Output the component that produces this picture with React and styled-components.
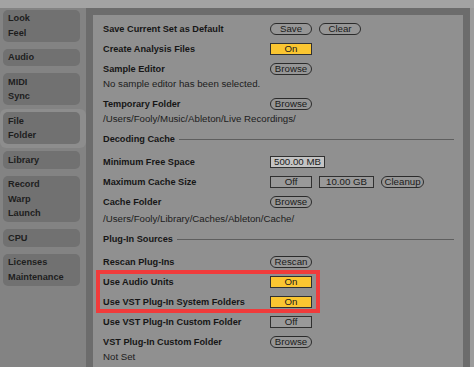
import styled, { createGlobalStyle } from "styled-components";

const GlobalStyle = createGlobalStyle`
  html, body {
    margin: 0;
    padding: 0;
  }
  body {
    background: #858585;
    font-family: "Liberation Sans", Arial, sans-serif;
  }
`;

const Window = styled.div`
  display: flex;
  flex-direction: column;
  width: 474px;
  height: 367px;
  overflow: hidden;
  background: #838383;
`;

const TopStrip = styled.div`
  height: 8px;
  flex: none;
  background: #a3a3a3;
`;

const Body = styled.div`
  display: flex;
  flex: 1;
  min-height: 0;
`;

const Sidebar = styled.nav`
  width: 86px;
  flex: none;
  display: flex;
  flex-direction: column;
  margin-top: -2px;
`;

const TabItem = styled.div`
  padding: 3.5px 6px 3.5px 3px;
  border-radius: 6px;
  background: ${(p) => (p.$selected ? "#8d8d8d" : "transparent")};
`;

const TabButton = styled.div`
  background: #717171;
  border-radius: 5px;
  padding: 1.5px 0 1.5px 5px;
  font-size: 9.2px;
  font-weight: 700;
  line-height: 14.5px;
  color: #1e1e1e;

  span {
    display: block;
  }
`;

const Frame = styled.main`
  flex: 1;
  border: 7px solid #6c6c6c;
  border-bottom: none;
  background: #909090;
  padding: 4px 9px 0 10px;
  overflow: hidden;
`;

const RightEdge = styled.div`
  width: 4px;
  flex: none;
  background: #9c9c9c;
`;

const Row = styled.div`
  display: grid;
  grid-template-columns: 167px 1fr;
  align-items: center;
  height: 20px;
`;

const Label = styled.div`
  font-size: 9.2px;
  font-weight: 700;
  color: #161616;
  white-space: nowrap;
`;

const Controls = styled.div`
  display: flex;
  align-items: center;
  gap: 7px;
`;

const Pill = styled.div`
  box-sizing: border-box;
  width: ${(p) => p.$w || 42}px;
  height: 12px;
  border: 1px solid #2b2b2b;
  border-radius: 6px;
  background: #969696;
  font-size: 9.7px;
  line-height: 10px;
  text-align: center;
  color: #1a1a1a;
`;

const tones = {
  on: "#fbc631",
  light: "#c4c4c4",
  plain: "#999999",
};

const Box = styled.div`
  box-sizing: border-box;
  width: ${(p) => p.$w || 42}px;
  height: 12px;
  border: 1px solid #303030;
  background: ${(p) => tones[p.$tone || "plain"]};
  font-size: 9.7px;
  line-height: 10px;
  text-align: center;
  color: #1a1a1a;
`;

const Info = styled.div`
  height: 20px;
  line-height: 20px;
  margin-top: ${(p) => p.$pull ?? -5}px;
  font-size: 9.7px;
  color: #1c1c1c;
  white-space: nowrap;
`;

const Section = styled.div`
  display: flex;
  align-items: center;
  gap: 4px;
  height: 20px;
  margin-bottom: 3px;
`;

const Rule = styled.div`
  flex: 1;
  height: 1px;
  background: #5e5e5e;
`;

const Highlight = styled.div`
  position: relative;

  &::after {
    content: "";
    position: absolute;
    left: -7px;
    top: -2px;
    width: 224px;
    height: 43px;
    box-sizing: border-box;
    border: 4px solid #f03b3b;
    pointer-events: none;
  }
`;

const tabs = [
  ["Look", "Feel"],
  ["Audio"],
  ["MIDI", "Sync"],
  ["File", "Folder"],
  ["Library"],
  ["Record", "Warp", "Launch"],
  ["CPU"],
  ["Licenses", "Maintenance"],
];

export default function App() {
  return (
    <>
      <GlobalStyle />
      <Window>
        <TopStrip />
        <Body>
          <Sidebar>
            {tabs.map((lines) => (
              <TabItem key={lines[0]} $selected={lines[0] === "File"}>
                <TabButton>
                  {lines.map((l) => (
                    <span key={l}>{l}</span>
                  ))}
                </TabButton>
              </TabItem>
            ))}
          </Sidebar>

          <Frame>
            <Row>
              <Label>Save Current Set as Default</Label>
              <Controls>
                <Pill>Save</Pill>
                <Pill>Clear</Pill>
              </Controls>
            </Row>
            <Row>
              <Label>Create Analysis Files</Label>
              <Controls>
                <Box $tone="on">On</Box>
              </Controls>
            </Row>
            <Row>
              <Label>Sample Editor</Label>
              <Controls>
                <Pill>Browse</Pill>
              </Controls>
            </Row>
            <Info>No sample editor has been selected.</Info>
            <Row>
              <Label>Temporary Folder</Label>
              <Controls>
                <Pill>Browse</Pill>
              </Controls>
            </Row>
            <Info>/Users/Fooly/Music/Ableton/Live Recordings/</Info>

            <Section>
              <Label>Decoding Cache</Label>
              <Rule />
            </Section>
            <Row>
              <Label>Minimum Free Space</Label>
              <Controls>
                <Box $tone="light" $w={55}>
                  500.00 MB
                </Box>
              </Controls>
            </Row>
            <Row>
              <Label>Maximum Cache Size</Label>
              <Controls>
                <Box>Off</Box>
                <Box $w={55}>10.00 GB</Box>
                <Pill $w={43}>Cleanup</Pill>
              </Controls>
            </Row>
            <Row>
              <Label>Cache Folder</Label>
              <Controls>
                <Pill>Browse</Pill>
              </Controls>
            </Row>
            <Info $pull={-3}>/Users/Fooly/Library/Caches/Ableton/Cache/</Info>

            <Section>
              <Label>Plug-In Sources</Label>
              <Rule />
            </Section>
            <Row>
              <Label>Rescan Plug-Ins</Label>
              <Controls>
                <Pill>Rescan</Pill>
              </Controls>
            </Row>
            <Highlight>
              <Row>
                <Label>Use Audio Units</Label>
                <Controls>
                  <Box $tone="on">On</Box>
                </Controls>
              </Row>
              <Row>
                <Label>Use VST Plug-In System Folders</Label>
                <Controls>
                  <Box $tone="on">On</Box>
                </Controls>
              </Row>
            </Highlight>
            <Row>
              <Label>Use VST Plug-In Custom Folder</Label>
              <Controls>
                <Box>Off</Box>
              </Controls>
            </Row>
            <Row>
              <Label>VST Plug-In Custom Folder</Label>
              <Controls>
                <Pill>Browse</Pill>
              </Controls>
            </Row>
            <Info>Not Set</Info>
          </Frame>
          <RightEdge />
        </Body>
      </Window>
    </>
  );
}
